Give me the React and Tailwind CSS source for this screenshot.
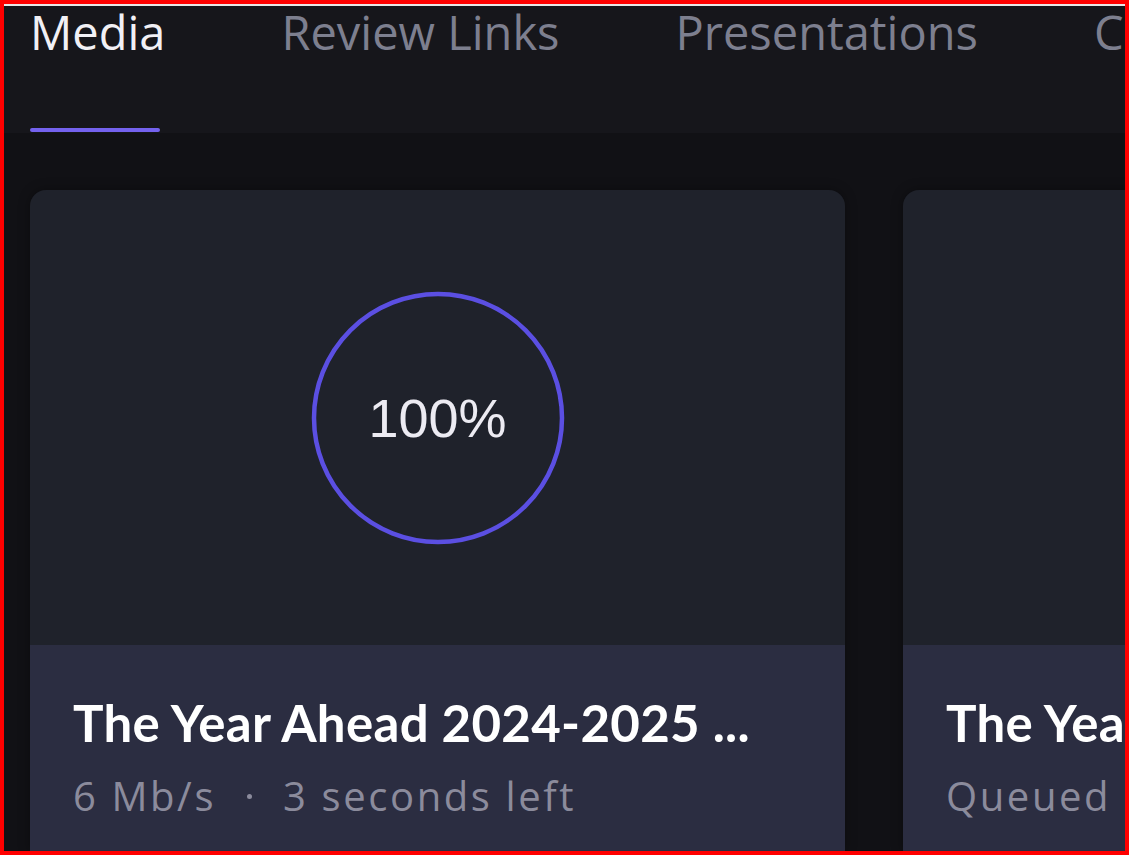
import React from "react";

const tabs = ["Media", "Review Links", "Presentations", "Collections"];

const uploads = [
  { title: "The Year Ahead 2024-2025 ...", meta: ["6 Mb/s", "3 seconds left"], progress: 100 },
  { title: "The Year Ahead 2024-2025 ...", meta: ["Queued"], progress: null },
];

const ProgressRing = ({ value }) => {
  const r = 124;
  const c = 2 * Math.PI * r;
  return (
    <div className="relative w-[254px] h-[254px] flex items-center justify-center">
      <svg width="254" height="254" viewBox="0 0 254 254" className="absolute inset-0 -rotate-90">
        <circle cx="127" cy="127" r={r} fill="none" stroke="#5b4fe2" strokeWidth="4.5" strokeDasharray={c} strokeDashoffset={c * (1 - value / 100)} />
      </svg>
      <span className="text-[54px] text-[#ecebf2] font-['Liberation_Sans',sans-serif] leading-none">{value}%</span>
    </div>
  );
};

const UploadCard = ({ item }) => (
  <div className="w-[815px] shrink-0 rounded-t-[16px] overflow-hidden shadow-[0_0_12px_rgba(0,0,0,0.35)]">
    <div className="h-[455px] bg-[#1f222b] flex items-center justify-center">
      {item.progress !== null && <ProgressRing value={item.progress} />}
    </div>
    <div className="h-[220px] bg-[#2b2d41] pl-[43px] pt-[52px]">
      <h3 className="text-[51px] font-bold text-white leading-none tracking-[0.3px] whitespace-nowrap">
        {item.title}
      </h3>
      <div className="mt-[28px] flex items-center text-[40px] text-[#8b8b9c] leading-none whitespace-nowrap font-['Open_Sans',sans-serif] tracking-[2.6px]">
        {item.meta.map((m, i) => (
          <React.Fragment key={m}>
            {i > 0 && <span className="mx-[31px] w-[5px] h-[5px] rounded-full bg-[#8b8b9c]" />}
            <span>{m}</span>
          </React.Fragment>
        ))}
      </div>
    </div>
  </div>
);

export default function App() {
  return (
    <div className="w-[1129px] h-[855px] overflow-hidden border-4 border-[#ff0000] bg-[#111115] flex flex-col font-['Lato',sans-serif]">
      {/* Tab bar */}
      <div className="h-[129px] shrink-0 bg-[#16161b] border-t-2 border-[#e8e8e8] flex pl-[26px] gap-[116px]">
        {tabs.map((t, i) => (
          <div key={t} className="flex flex-col justify-between shrink-0">
            <span className={`text-[47px] leading-[52px] whitespace-nowrap font-['Open_Sans',sans-serif] ${i === 0 ? "text-[#f1f0f5]" : "text-[#7d7f8f]"}`}>
              {t}
            </span>
            {i === 0 && <div className="w-[130px] h-[4px] rounded-full bg-[#7462ee] mb-[1px]" />}
          </div>
        ))}
      </div>

      {/* Upload cards */}
      <div className="flex gap-[58px] pl-[26px] pt-[57px] overflow-hidden">
        {uploads.map((u, i) => (
          <UploadCard key={i} item={u} />
        ))}
      </div>
    </div>
  );
}
